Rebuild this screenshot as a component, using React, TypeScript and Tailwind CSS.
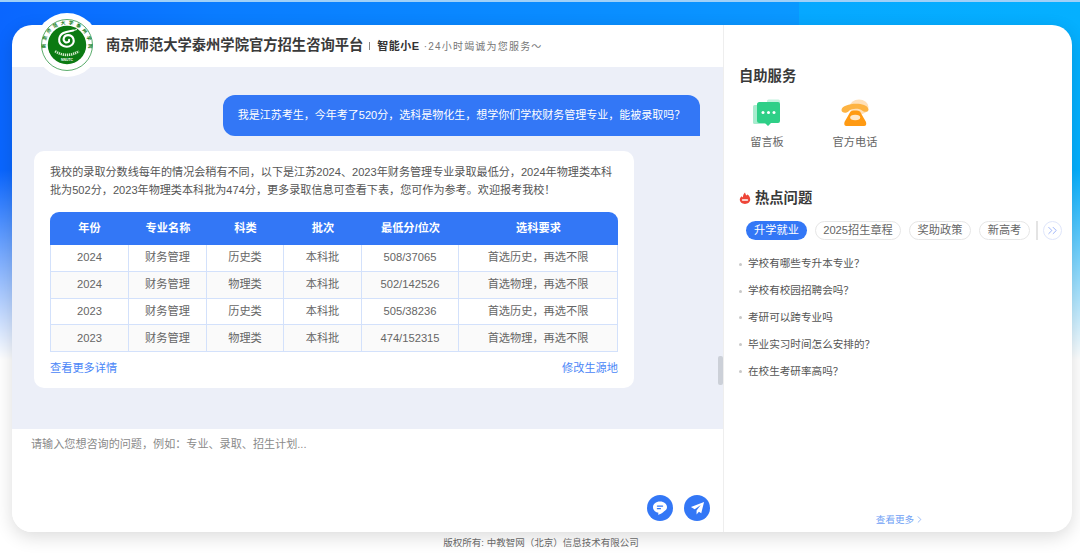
import { ChevronRight, ChevronsRight } from "lucide-react";

const rows = [
  ["2024", "财务管理", "历史类", "本科批", "508/37065", "首选历史\uFF0C再选不限"],
  ["2024", "财务管理", "物理类", "本科批", "502/142526", "首选物理\uFF0C再选不限"],
  ["2023", "财务管理", "历史类", "本科批", "505/38236", "首选历史\uFF0C再选不限"],
  ["2023", "财务管理", "物理类", "本科批", "474/152315", "首选物理\uFF0C再选不限"],
];

const heads = ["年份", "专业名称", "科类", "批次", "最低分/位次", "选科要求"];
const questions = [
  "学校有哪些专升本专业\uFF1F",
  "学校有校园招聘会吗\uFF1F",
  "考研可以跨专业吗",
  "毕业实习时间怎么安排的\uFF1F",
  "在校生考研率高吗\uFF1F",
];

const Logo = () => (
  <svg viewBox="0 0 100 100" className="h-[52px] w-[52px]">
    <circle cx="50" cy="50" r="49" fill="#fff" stroke="#2b9440" strokeWidth="1.5" />
    <circle cx="50" cy="50" r="37" fill="#0b7a12" />
    <defs>
      <path id="logoArc" d="M 9 58 A 41.500 41.500 0 1 1 91 58" />
    </defs>
    <text fontSize="9" fontWeight="700" fill="#0b7a12">
      <textPath href="#logoArc" startOffset="1%" textLength="140">
        南京师范大学泰州学院
      </textPath>
    </text>
    <path
      d="M62 22 C54 24 36 24 35 39 C34 52 50 57 59 50 C66 44 63 31 52 31 C44 31 41 40 46 44 C50 47 55 44 54 40"
      fill="none"
      stroke="#fff"
      strokeWidth="4"
      strokeLinecap="round"
    />
    <path d="M62 22 L69 20" stroke="#fff" strokeWidth="2" />
    <path d="M27 62 Q50 76 73 62" fill="none" stroke="#d8eccf" strokeWidth="5" strokeDasharray="2.500 1.500" />
    <rect x="38" y="74" width="24" height="6" fill="#0b7a12" />
    <text x="50" y="80" fontSize="6.500" fontWeight="700" fill="#fff" textAnchor="middle">
      NNUTC
    </text>
  </svg>
);

const Flame = () => (
  <svg viewBox="0 0 14 15" className="h-[12px] w-[12px]">
    <path
      d="M7 0.500c.5 2 1.200 3 2.200 4 .5-.5.8-1 .8-1.600 2 1.400 3.500 3.600 3.500 6.600 0 3.200-2.900 5.500-6.500 5.500S.5 12.700.5 9.500C.5 7 2 5.800 3 5.200c.6 1 1 1.200 1.500 1.400C4.300 4.500 5.300 2 7 .5z"
      fill="#ee4538"
    />
    <rect x="3" y="8.800" width="8" height="2.400" rx="1.200" fill="#fff" opacity="0.75" />
  </svg>
);

const MessageIcon = () => (
  <svg viewBox="0 0 28 28" className="h-[28px] w-[28px]">
    <rect x="0" y="6" width="16" height="19" rx="1.500" fill="#a8ecce" />
    <rect x="14" y="0.500" width="13" height="10" rx="1.500" fill="#c4f2de" />
    <path
      d="M4 5.500 Q4 3 6.500 3 H25 Q27 3 27 5 V22 Q27 24 25 24 H18 L15 27 L12 24 H6.500 Q4 24 4 21.500 Z"
      fill="#2ecf87"
    />
    <circle cx="10" cy="13.500" r="1.500" fill="#fff" />
    <circle cx="15.500" cy="13.500" r="1.500" fill="#fff" />
    <circle cx="21" cy="13.500" r="1.500" fill="#fff" />
  </svg>
);

const PhoneIcon = () => (
  <svg viewBox="0 0 28 28" className="h-[28px] w-[28px]">
    <ellipse cx="18" cy="8" rx="9.500" ry="7.500" fill="#ffe0b8" />
    <path
      d="M0.500 11 C1 4 25 2 27.500 10 C28 13.500 23 13.500 21 11.500 C19 9 10 9 8 12 C6 14.500 0.500 14.500 0.500 11 Z"
      fill="#fdb342"
    />
    <path d="M9.500 12.500 C10.500 11 18 11 19 12.500 L25 23 Q26 27 23 27 H5.500 Q2.500 27 3.500 23 Z" fill="#ff9a12" />
    <ellipse cx="14.200" cy="18.500" rx="5" ry="2.800" fill="#ffe8c8" />
  </svg>
);

const ChatIcon = () => (
  <svg viewBox="0 0 16 16" className="h-[16px] w-[16px]">
    <path
      d="M8 1.500C3.900 1.500 1 4 1 7.200c0 2.900 2.400 5.200 5.500 5.600l-.5 2c2.400-.7 4.500-1.700 6.200-3.500C14 10.200 15 8.900 15 7.200 15 4 12.100 1.500 8 1.500z"
      fill="#fff"
    />
    <rect x="4.800" y="5.400" width="6.400" height="1.300" rx="0.600" fill="#3377f6" />
    <rect x="4.800" y="8" width="4.200" height="1.300" rx="0.600" fill="#3377f6" />
  </svg>
);

const PlaneIcon = () => (
  <svg viewBox="0 0 16 16" className="h-[15px] w-[15px]">
    <path d="M15 1 L1 6.500 L5 8.800 L11.500 4.200 L7 10 L7 14.500 L9.500 11.500 L12 13 Z" fill="#fff" />
  </svg>
);

export default function App() {
  return (
    <div className="relative flex h-[554px] w-[1080px] flex-col overflow-hidden bg-white font-['Liberation_Sans','Noto_Sans_CJK_SC',sans-serif] text-[#555]">
      {/* blue banner that fades out down the page */}
      <div className="absolute inset-x-0 top-0 h-[360px] bg-[linear-gradient(90deg,#0a66ff_0,#0a7cff_20%,#0a90ff_60%,#0a98ff_74%,#06a8ff_74%,#05b0ff_100%)]" />
      <div className="absolute inset-x-0 top-0 h-[2px] bg-[#9fd0f8]" />
      <div className="absolute inset-x-0 top-[170px] h-[190px] bg-[linear-gradient(180deg,rgba(255,255,255,0),#ffffff)]" />

      <div className="relative ml-[12px] mt-[25px] flex h-[507px] w-[1060px] overflow-hidden rounded-[20px] bg-white shadow-[0_5px_18px_rgba(0,0,0,0.14)]">
        {/* left column */}
        <div className="flex w-[712px] flex-col">
          <div className="flex h-[42px] items-center pl-[94px]">
            <span className="text-[14.300px] font-bold text-[#3a3a3a]">南京师范大学泰州学院官方招生咨询平台</span>
            <span className="ml-[6px] h-[8px] w-px bg-[#888]" />
            <span className="ml-[7px] text-[11px] font-bold tracking-[0.500px] text-[#333]">智能小E</span>
            <span className="ml-[4px] text-[10px] tracking-[1.200px] text-[#777]">{"·24小时竭诚为您服务\uFF5E"}</span>
          </div>

          <div className="relative flex-1 bg-[#eceff8] pl-[22px] pr-[23px] pt-[28px]">
            <div className="flex justify-end">
              <div className="flex h-[41px] w-[477px] items-center justify-center rounded-[12px] rounded-br-none bg-[#3377f6] text-[11px] text-white">
                {"我是江苏考生\uFF0C今年考了520分\uFF0C选科是物化生\uFF0C想学你们学校财务管理专业\uFF0C能被录取吗\uFF1F"}
              </div>
            </div>

            <div className="mt-[15px] h-[237px] w-[600px] rounded-[10px] bg-white px-[16px] pt-[12px]">
              <p className="text-[11.100px] leading-[18px] text-[#555]">
                {"我校的录取分数线每年的情况会稍有不同\uFF0C以下是江苏2024、2023年财务管理专业录取最低分\uFF0C2024年物理类本科批为502分\uFF0C2023年物理类本科批为474分\uFF0C更多录取信息可查看下表\uFF0C您可作为参考。欢迎报考我校\uFF01"}
              </p>
              <table className="mt-[13px] w-[568px] table-fixed border-separate border-spacing-0 text-center text-[11.200px]">
                <colgroup>
                  <col className="w-[79px]" />
                  <col className="w-[78px]" />
                  <col className="w-[77px]" />
                  <col className="w-[78px]" />
                  <col className="w-[97px]" />
                  <col className="w-[159px]" />
                </colgroup>
                <thead>
                  <tr>
                    {heads.map((h, i) => (
                      <th
                        key={h}
                        className={`h-[33px] bg-[#3377f6] font-bold text-white ${i === 0 ? "rounded-tl-[9px]" : ""} ${i === 5 ? "rounded-tr-[9px]" : ""}`}
                      >
                        {h}
                      </th>
                    ))}
                  </tr>
                </thead>
                <tbody>
                  {rows.map((row, r) => (
                    <tr key={r} className={r % 2 === 1 ? "bg-[#fafafa]" : "bg-white"}>
                      {row.map((c, i) => (
                        <td
                          key={i}
                          className={`h-[26.750px] border-b border-r border-[#d3e1fb] text-[#666] ${i === 0 ? "border-l" : ""}`}
                        >
                          {c}
                        </td>
                      ))}
                    </tr>
                  ))}
                </tbody>
              </table>
              <div className="mt-[8px] flex w-[568px] justify-between text-[11.200px] leading-[16px] text-[#4a86f7]">
                <span>查看更多详情</span>
                <span>修改生源地</span>
              </div>
            </div>

            {/* scrollbar thumb */}
            <div className="absolute right-0 top-[289px] h-[29px] w-[5px] rounded-[2px] bg-[#ccd0d8]" />
          </div>

          <div className="relative h-[103px] bg-white pl-[19px] pt-[7px] text-[11.100px] text-[#8a8a8a]">
            {"请输入您想咨询的问题\uFF0C例如\uFF1A专业、录取、招生计划..."}
            <div className="absolute bottom-[11px] right-[13px] flex gap-[11px]">
              <div className="flex h-[26px] w-[26px] items-center justify-center rounded-full bg-[#3377f6]">
                <ChatIcon />
              </div>
              <div className="flex h-[26px] w-[26px] items-center justify-center rounded-full bg-[#3377f6]">
                <PlaneIcon />
              </div>
            </div>
          </div>
        </div>

        {/* right column */}
        <div className="flex flex-1 flex-col border-l border-[#eeeeee] pl-[15px] pr-[10px] pt-[41px]">
          <h2 className="text-[14.300px] font-bold leading-[20px] text-[#3a3a3a]">自助服务</h2>
          <div className="mt-[13px] flex">
            <div className="flex w-[56px] flex-col items-center">
              <MessageIcon />
              <span className="mt-[7px] text-[11.200px] leading-[16px] text-[#666]">留言板</span>
            </div>
            <div className="ml-[32px] flex w-[56px] flex-col items-center">
              <PhoneIcon />
              <span className="mt-[7px] whitespace-nowrap text-[11.200px] leading-[16px] text-[#666]">官方电话</span>
            </div>
          </div>

          <div className="mt-[38px] flex items-center gap-[4px]">
            <Flame />
            <h2 className="text-[14.300px] font-bold leading-[20px] text-[#3a3a3a]">热点问题</h2>
          </div>

          <div className="ml-[7px] mt-[13px] flex items-center text-[11.200px] text-[#666]">
            <span className="flex h-[19px] w-[61px] items-center justify-center rounded-full bg-[#3377f6] text-white">升学就业</span>
            <span className="ml-[8px] flex h-[19px] w-[86px] items-center justify-center rounded-full border border-[#e6e6e6]">2025招生章程</span>
            <span className="ml-[8px] flex h-[19px] w-[62px] items-center justify-center rounded-full border border-[#e6e6e6]">奖助政策</span>
            <span className="ml-[8px] flex h-[19px] w-[51px] items-center justify-center rounded-full border border-[#e6e6e6]">新高考</span>
            <span className="ml-[6px] h-[19px] w-[2px] bg-[#e4e4e4]" />
            <span className="ml-[5px] flex h-[19px] w-[19px] items-center justify-center rounded-full border border-[#dfe6fb] text-[#7f9cf5]">
              <ChevronsRight size={15} strokeWidth={1.2} />
            </span>
          </div>

          <ul className="mt-[11px] flex flex-col text-[10.600px] text-[#555]">
            {questions.map((q) => (
              <li key={q} className="flex h-[26.800px] items-center">
                <span className="mr-[6px] h-[3px] w-[3px] rounded-full bg-[#c8c8c8]" />
                {q}
              </li>
            ))}
          </ul>

          <div className="mb-[5px] mt-auto flex items-center justify-center text-[9.600px] text-[#6f9ff5]">
            查看更多
            <ChevronRight size={11} strokeWidth={1.5} />
          </div>
        </div>
      </div>

      {/* logo sits over the card's corner */}
      <div className="absolute left-[35px] top-[13px] flex h-[64px] w-[64px] items-center justify-center rounded-full bg-white">
        <Logo />
      </div>

      <div className="relative flex flex-1 items-center justify-center pl-[2px] text-[9.500px] text-[#666]">
        {"版权所有: 中教智网\uFF08北京\uFF09信息技术有限公司"}
      </div>
    </div>
  );
}
